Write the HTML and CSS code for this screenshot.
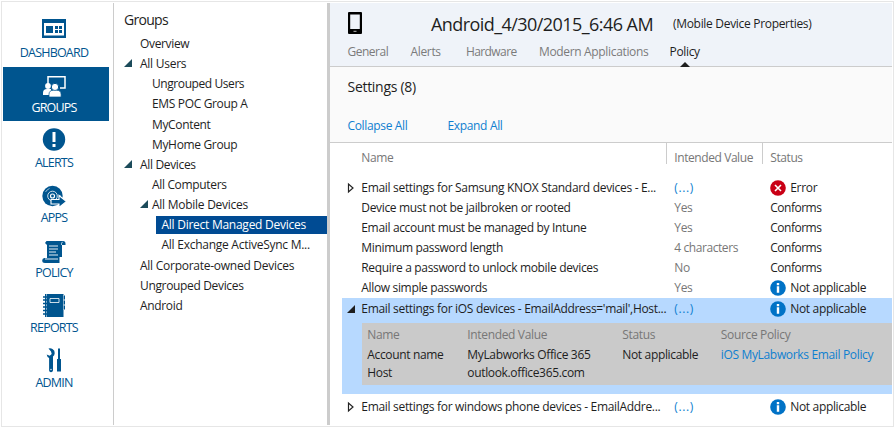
FILE: index.html
```html
<!DOCTYPE html>
<html lang="en">
<head>
<meta charset="utf-8">
<title>Mobile Device Properties</title>
<link rel="stylesheet" href="styles.css">
</head>
<body>
<svg width="0" height="0" class="defs">
  <symbol id="info" viewBox="0 0 16 16"><circle cx="8" cy="8" r="7.8" fill="#0072c6"/><path d="M6.8 3h2.4v2.2H6.8zM6.8 6.3h2.4v6.5H6.8z" fill="#fff"/></symbol>
  <symbol id="error" viewBox="0 0 16 16"><circle cx="8" cy="8" r="7.8" fill="#c90016"/><path d="M5 5l6 6M11 5l-6 6" stroke="#fff" stroke-width="1.6"/></symbol>
  <symbol id="closed" viewBox="0 0 8 12"><path d="M1.5 2v8L6 6z" fill="none" stroke="#222" stroke-width="1.2"/></symbol>
  <symbol id="open" viewBox="0 0 8 8"><path d="M8 0v8H0z" fill="currentColor"/></symbol>
</svg>
<div class="app">
  <nav class="nav">
    <a class="nav-item">
      <svg class="nav-icon" viewBox="0 0 28 28"><path d="M2 2h24v19H2zM4 6v12.500h20V6z" fill="currentColor" fill-rule="evenodd"/><path d="M6 9h7v7H6zM15 9h3v3h-3zM19 9h3v3h-3zM15 13h3v3h-3zM19 13h3v3h-3z" fill="currentColor"/></svg>
      <span>DASHBOARD</span></a>
    <a class="nav-item active">
      <svg class="nav-icon" viewBox="0 0 28 28"><path d="M8 12V4.800h17V16h-5" fill="none" stroke="currentColor" stroke-width="1.500"/><circle cx="8" cy="14" r="2.900" fill="currentColor"/><path d="M3 23v-2q0-4 4-4h4v6z" fill="currentColor"/><circle cx="15" cy="15" r="3.700" fill="currentColor" stroke="#00558f"/><path d="M9 25v-2.500q0-4.200 4.300-4.200h3.500q4.300 0 4.300 4.200V25z" fill="currentColor" stroke="#00558f" stroke-width=".7"/></svg>
      <span>GROUPS</span></a>
    <a class="nav-item">
      <svg class="nav-icon" viewBox="0 0 28 28"><circle cx="14" cy="12.500" r="11.200" fill="currentColor"/><path d="M12.500 5h3v10h-3zM12.500 17h3v3h-3z" fill="#fff"/></svg>
      <span>ALERTS</span></a>
    <a class="nav-item">
      <svg class="nav-icon" viewBox="0 0 28 28"><circle cx="12.500" cy="14" r="10.200" fill="currentColor"/><g fill="none" stroke="#fff"><circle cx="12.500" cy="14" r="4.800" stroke-width=".8"/><circle cx="12.500" cy="14" r="2" stroke-width="1.200"/><path d="M5.500 10a8 8 0 0 1 4-3.500M19.500 18a8 8 0 0 0 .5-5" stroke-width=".6"/></g><path d="M11 17.500h8v-4l7.500 6-7.500 6v-3.500h-8z" fill="currentColor" stroke="#fff" stroke-width="1.100"/></svg>
      <span>APPS</span></a>
    <a class="nav-item">
      <svg class="nav-icon" viewBox="0 0 28 28"><path d="M6.500 4H23q2.500 0 2.500 2.500V8H22v12h-2.500v6H5q-2.800 0-2.800-2.500T4.500 21h2.500V8L5 6z" fill="currentColor"/><path d="M9 9h9M9 12h9M9 15h7M9 18h9M5 22h13" stroke="#fff" stroke-width=".9"/><path d="M21.500 8V6.500q0-1.300 1.200-1.300" fill="none" stroke="#fff" stroke-width=".7"/></svg>
      <span>POLICY</span></a>
    <a class="nav-item">
      <svg class="nav-icon" viewBox="0 0 28 28"><path d="M5 2h18.500v1.500H25v4h-1.500v1H25v4h-1.500v1H25v4h-1.500v7.500H5z" fill="currentColor"/><path d="M6.500 2v23M23.500 3v15" stroke="#fff" stroke-width=".5"/><path d="M3 5h4M3 8h4M3 11.500h4M3 15h4M3 18.500h4M3 22h4" stroke="currentColor" stroke-width="1.300"/><path d="M10 6.500h9v4h-9z" fill="none" stroke="#fff" stroke-width=".8"/></svg>
      <span>REPORTS</span></a>
    <a class="nav-item">
      <svg class="nav-icon" viewBox="0 0 28 28"><path d="M8.500 1.500q2-.8 4 .5 2.500 1.500 2.200 4.200-.2 2.300-1.700 3.300v14q-.3 1.800-2 1.800t-1.900-1.800V11Q7 10 6.700 7.500l3 1.200 2-1.700-.7-2.500z" fill="currentColor"/><path d="M18 1.500h2V12h1v12.500h-4V12h1z" fill="currentColor"/><circle cx="11" cy="22.500" r=".7" fill="#fff"/></svg>
      <span>ADMIN</span></a>
  </nav>

  <aside class="tree">
    <h2 class="tree-title">Groups</h2>
    <ul class="tree-list">
      <li class="l1">Overview</li>
      <li class="l1 wide"><svg class="caret"><use href="#open"/></svg>All Users</li>
      <li class="l2 tight">Ungrouped Users</li>
      <li class="l2">EMS POC Group A</li>
      <li class="l2">MyContent</li>
      <li class="l2">MyHome Group</li>
      <li class="l1"><svg class="caret"><use href="#open"/></svg>All Devices</li>
      <li class="l2">All Computers</li>
      <li class="l2 wide"><svg class="caret near"><use href="#open"/></svg>All Mobile Devices</li>
      <li class="l3 wide"><span class="selected">All Direct Managed Devices</span></li>
      <li class="l3 wide"><span>All Exchange ActiveSync M...</span></li>
      <li class="l1 wide">All Corporate-owned Devices</li>
      <li class="l1">Ungrouped Devices</li>
      <li class="l1">Android</li>
    </ul>
  </aside>

  <main class="main">
    <header class="head">
      <div class="head-top">
        <svg class="phone" viewBox="0 0 14 22"><path d="M0 1q0-1 1-1h12q1 0 1 1v20q0 1-1 1H1q-1 0-1-1zM2.200 2.500V17h9.600V2.500z" fill="#000" fill-rule="evenodd"/><path d="M5.500 19.300h3" stroke="#bbb"/></svg>
        <h1>Android_4/30/2015_6:46 AM</h1>
        <span class="kind">(Mobile Device Properties)</span>
      </div>
      <div class="tabs">
        <a class="t-general">General</a><a class="t-alerts">Alerts</a><a class="t-hardware">Hardware</a><a class="t-modern">Modern Applications</a><a class="current">Policy</a>
      </div>
    </header>
    <section class="settings">
      <h3>Settings (8)</h3>
      <div class="actions"><a>Collapse All</a><a>Expand All</a></div>
    </section>
    <section class="table">
      <div class="row columns"><i></i><span>Name</span><span class="tight">Intended Value</span><span class="tight">Status</span></div>
      <div class="row"><svg class="toggle"><use href="#closed"/></svg><span class="long">Email settings for Samsung KNOX Standard devices - E...</span><a>(...)</a><span class="status"><svg><use href="#error"/></svg>Error</span></div>
      <div class="row"><i></i><span>Device must not be jailbroken or rooted</span><em>Yes</em><span class="conforms">Conforms</span></div>
      <div class="row"><i></i><span>Email account must be managed by Intune</span><em>Yes</em><span class="conforms">Conforms</span></div>
      <div class="row"><i></i><span>Minimum password length</span><em class="tight">4 characters</em><span class="conforms">Conforms</span></div>
      <div class="row"><i></i><span>Require a password to unlock mobile devices</span><em>No</em><span class="conforms">Conforms</span></div>
      <div class="row"><i></i><span>Allow simple passwords</span><em>Yes</em><span class="status"><svg><use href="#info"/></svg>Not applicable</span></div>
      <div class="expanded">
        <div class="row"><svg class="toggle-open"><use href="#open"/></svg><span class="long">Email settings for iOS devices - EmailAddress='mail',Host...</span><a>(...)</a><span class="status"><svg><use href="#info"/></svg>Not applicable</span></div>
        <div class="details">
          <em>Name</em><em>Intended Value</em><em>Status</em><em>Source Policy</em>
          <span>Account name</span><span>MyLabworks Office 365</span><span>Not applicable</span><a>iOS MyLabworks Email Policy</a>
          <span>Host</span><span>outlook.office365.com</span>
        </div>
      </div>
      <div class="row last"><svg class="toggle"><use href="#closed"/></svg><span class="long">Email settings for windows phone devices - EmailAddre...</span><a>(...)</a><span class="status"><svg><use href="#info"/></svg>Not applicable</span></div>
    </section>
  </main>
</div>
</body>
</html>
```
FILE: styles.css
```css
* { box-sizing: border-box; margin: 0; padding: 0; }
body {
  background: #fff;
  color: #1e1e1e;
  font: 12px/20px "Open Sans", "Noto Sans", sans-serif;
  letter-spacing: -0.34px;
  white-space: nowrap;
  overflow: hidden;
}
.defs { display: block; }
h1, h2, h3 { font-weight: 400; }
em, i { font-style: normal; }
a { color: #0f7fd0; }

.app {
  display: flex;
  width: 893px;
  height: 426px;
  margin: 1px 0 0 1px;
  padding: 1px;
  border: 1px solid #e6e6e6;
}

/* Left navigation */
.nav { width: 110px; padding: 9px 4px 0 0; }
.nav-item {
  display: flex;
  flex-direction: column;
  align-items: center;
  height: 55px;
  padding: 5px 4px 0 0;
  color: #00558f;
  font-size: 12.500px;
  letter-spacing: -0.8px;
  line-height: 16px;
}
.nav-item.active { height: 54px; margin-bottom: 1px; background: #00558f; color: #fff; }
.nav-icon { width: 28px; height: 28px; }

/* Group tree */
.tree { width: 214px; border-left: 1px solid #ccc; padding-top: 5px; }
.tree-title { margin-left: 10px; font-size: 14px; line-height: 24px; letter-spacing: -0.7px; }
.tree-list { list-style: none; margin-top: 2px; line-height: 20.150px; }
.tree li { display: flex; align-items: center; height: 20.150px; }
.l1 { padding-left: 26px; }
.l2 { padding-left: 38px; }
.l3 { padding-left: 42px; }
.l3 span { flex: 1; padding-left: 5.500px; height: 18px; line-height: 17px; }
.selected { background: #004b93; color: #fff; }
.caret { width: 8px; height: 8px; margin: -2px 8px 0 -16px; color: #1c4b5a; }
.caret.near { margin: -2px 4px 0 -12px; }
.wide { letter-spacing: -0.26px; }
.tight { letter-spacing: -0.42px; }

/* Device details */
.main { flex: 1; border-left: 3px solid #ccc; }
.head { height: 64px; background: #eff3f9; border-bottom: 1px solid #ccc; }
.head-top { display: flex; align-items: center; height: 39px; padding: 2px 0 0 18px; }
.phone { width: 14px; height: 22px; margin-top: -2px; }
h1 { width: 242px; margin-left: 69px; font-size: 18px; letter-spacing: -0.56px; }
.kind { letter-spacing: -0.31px; }
.tabs { display: flex; height: 24px; padding-left: 17.500px; }
.tabs a { color: #7b7b7b; }
.tabs .t-general { width: 63px; letter-spacing: -0.5px; }
.tabs .t-alerts { width: 55.500px; }
.tabs .t-hardware { width: 73px; letter-spacing: -0.6px; }
.tabs .t-modern { width: 130.500px; }
.tabs .current { position: relative; color: #1e1e1e; }
.current::after {
  content: "";
  position: absolute;
  left: 10.500px;
  top: 20px;
  border: 5px solid transparent;
  border-top: 0;
  border-bottom-color: #1e1e1e;
}
.settings { height: 76px; padding: 9px 0 0 17.500px; background: #fafafa; border-bottom: 1px solid #ccc; }
.settings h3 { font-size: 14px; line-height: 22px; letter-spacing: -0.29px; }
.actions { display: flex; gap: 40px; margin-top: 18px; }

.row {
  display: grid;
  grid-template-columns: 14px 313px 96px 1fr;
  align-items: center;
  height: 20px;
  padding-left: 17.300px;
}
.row em, .details em { color: #777; }
.columns { align-items: stretch; margin-bottom: 15px; line-height: 30px; color: #777; }
.columns span:nth-child(n+3) { position: relative; }
.columns span:nth-child(n+3)::before {
  content: "";
  position: absolute;
  left: -8px;
  top: 0;
  height: 21px;
  border-left: 1px solid #ccc;
}
.long { letter-spacing: -0.31px; }
.conforms { letter-spacing: -0.5px; }
.status { display: flex; align-items: center; gap: 4px; }
.status svg { width: 16px; height: 16px; }
.toggle { width: 8px; height: 12px; }
.toggle-open { width: 8px; height: 8px; }
.row a { letter-spacing: 0.6px; }

.expanded { height: 96px; margin-left: 12px; background: #b7d9ff; }
.expanded .row { height: 22px; padding-left: 5.300px; }
.details {
  display: grid;
  grid-template-columns: 100px 155px 98.500px 1fr;
  grid-template-rows: 20px 18px 18px;
  height: 62px;
  margin: 3px 0 0 20px;
  padding: 2px 0 0 5.300px;
  background: #cacaca;
}
.last { margin-top: 3px; }
```
